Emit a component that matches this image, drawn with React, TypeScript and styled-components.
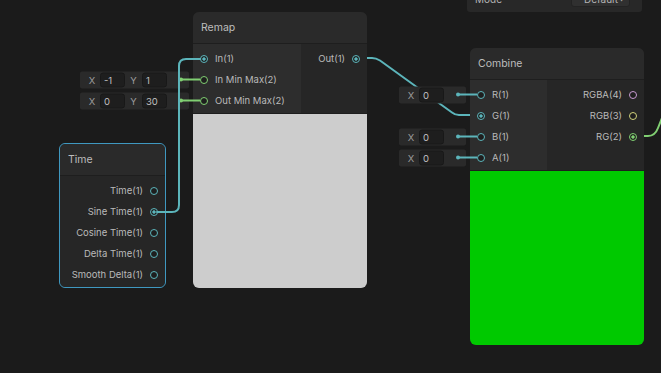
import styled, { createGlobalStyle } from 'styled-components';

const BLUE = '#5cb5bb';
const GREEN = '#80cf72';
const PINK = '#c89bd2';
const YELLOW = '#d3d37c';

const GlobalStyle = createGlobalStyle`
  html, body {
    margin: 0;
    padding: 0;
    background: #1b1b1b;
  }
  body {
    font-family: Inter, "Noto Sans", sans-serif;
    font-size: 9.5px;
    color: #bababa;
  }
`;

const Canvas = styled.div`
  position: relative;
  width: 661px;
  height: 373px;
  overflow: hidden;
  background: #1b1b1b;
`;

const Wires = styled.svg<{ $top?: boolean }>`
  position: absolute;
  left: 0;
  top: 0;
  width: 661px;
  height: 373px;
  pointer-events: none;
  z-index: ${(p) => (p.$top ? 3 : 0)};

  path {
    fill: none;
    stroke-width: 2;
    stroke-linecap: round;
    stroke-linejoin: round;
  }
`;

const Inspector = styled.div`
  position: absolute;
  left: 467px;
  top: -14px;
  width: 175px;
  height: 26px;
  box-sizing: border-box;
  padding: 0 12px 0 8px;
  background: #282828;
  border-radius: 0 0 3px 3px;
  display: flex;
  align-items: center;
  justify-content: space-between;
  z-index: 2;
  font-size: 10px;
  color: #b4b4b4;
`;

const Dropdown = styled.div`
  width: 59px;
  height: 16px;
  box-sizing: border-box;
  padding: 0 6px 0 12px;
  background: #303030;
  border: 1px solid #232323;
  border-radius: 3px;
  display: flex;
  align-items: center;
  justify-content: space-between;

  span {
    font-size: 7px;
    color: #aaa;
  }
`;

const Node = styled.div<{ $x: number; $y: number; $w: number; $selected?: boolean }>`
  position: absolute;
  left: ${(p) => p.$x}px;
  top: ${(p) => p.$y}px;
  width: ${(p) => p.$w}px;
  box-sizing: border-box;
  z-index: 1;
  display: flex;
  flex-direction: column;
  border-radius: 6px;
  background: #262626;
  border: ${(p) => (p.$selected ? '1px solid #3f98c0' : 'none')};
`;

const Header = styled.div`
  height: 31px;
  padding-left: 8px;
  display: flex;
  align-items: center;
  background: #2a2a2a;
  border-bottom: 1px solid #1e1e1e;
  border-radius: 6px 6px 0 0;
  font-size: 10.5px;
  color: #bdbdbd;
`;

const Body = styled.div`
  display: flex;
`;

const Inputs = styled.div<{ $w: number }>`
  width: ${(p) => p.$w}px;
  padding: 4px 0 2px;
  background: #2d2d2d;
`;

const Outputs = styled.div<{ $round?: boolean }>`
  flex: 1;
  padding: 4px 0 2px;
  background: #262626;
  border-radius: ${(p) => (p.$round ? '0 0 6px 6px' : '0')};
`;

const PortRow = styled.div<{ $out?: boolean }>`
  position: relative;
  height: 21px;
  display: flex;
  align-items: center;
  gap: 7px;
  justify-content: ${(p) => (p.$out ? 'flex-end' : 'flex-start')};
  padding: ${(p) => (p.$out ? '0 7px 0 0' : '0 0 0 7px')};
  white-space: nowrap;
`;

const Port = styled.span<{ $c: string; $on?: boolean }>`
  flex: none;
  width: 8px;
  height: 8px;
  box-sizing: border-box;
  border-radius: 50%;
  border: 1.5px solid ${(p) => p.$c};
  background: ${(p) =>
    p.$on ? `radial-gradient(circle, ${p.$c} 0 1.4px, #1e1e1e 1.9px)` : '#1e1e1e'};
`;

const FieldAttach = styled.div`
  position: absolute;
  right: calc(100% - 7px);
  top: 50%;
  transform: translateY(-50%);
  display: flex;
  align-items: center;
`;

const FieldBox = styled.div`
  height: 17px;
  padding: 0 6px 0 4px;
  display: flex;
  align-items: center;
  background: #2a2a2a;
  border-radius: 2px;
`;

const Axis = styled.span<{ $w?: number }>`
  width: ${(p) => p.$w ?? 16}px;
  text-align: center;
  color: #9c9c9c;
`;

const NumInput = styled.span`
  width: 25px;
  height: 15px;
  box-sizing: border-box;
  padding-left: 3px;
  display: flex;
  align-items: center;
  background: #1e1e1e;
  border: 1px solid #181818;
  border-radius: 3px;
  color: #c0c0c0;
`;

const Dot = styled.span<{ $c: string }>`
  width: 4px;
  height: 4px;
  margin-left: 12px;
  border-radius: 50%;
  background: ${(p) => p.$c};
`;

const Stub = styled.span<{ $c: string }>`
  width: 19px;
  height: 2px;
  margin-left: -8px;
  background: ${(p) => p.$c};
`;

const Preview = styled.div<{ $c: string }>`
  height: 174px;
  background: ${(p) => p.$c};
  border-top: 1px solid #1e1e1e;
  border-radius: 0 0 6px 6px;
`;

type Field = { axis: string; value: string }[];

const InPort = ({ label, color, on, field }: { label: string; color: string; on?: boolean; field?: Field }) => (
  <PortRow>
    {field && (
      <FieldAttach>
        <FieldBox>
          {field.map((f, i) => (
            <span key={f.axis} style={{ display: 'contents' }}>
              <Axis $w={i === 0 ? 16 : 17}>{f.axis}</Axis>
              <NumInput>{f.value}</NumInput>
            </span>
          ))}
          <Dot $c={color} />
        </FieldBox>
        <Stub $c={color} />
      </FieldAttach>
    )}
    <Port $c={color} $on={on} />
    <span>{label}</span>
  </PortRow>
);

const OutPort = ({ label, color, on }: { label: string; color: string; on?: boolean }) => (
  <PortRow $out>
    <span>{label}</span>
    <Port $c={color} $on={on} />
  </PortRow>
);

const App = () => {
  return (
    <Canvas>
      <GlobalStyle />
      <Wires viewBox="0 0 661 373">
        <path
          d="M361,58 H372 Q376,58 380,60.5 L452,112.5 Q455,115 459,115 H476"
          stroke={BLUE}
        />
        <path d="M637,136 H648 Q655,136 658,128 L666,108" stroke={GREEN} />
      </Wires>

      <Inspector>
        <span>Mode</span>
        <Dropdown>
          Default<span>▼</span>
        </Dropdown>
      </Inspector>

      <Node $x={193} $y={12} $w={174}>
        <Header>Remap</Header>
        <Body>
          <Inputs $w={108}>
            <InPort label="In(1)" color={BLUE} on />
            <InPort
              label="In Min Max(2)"
              color={GREEN}
              field={[
                { axis: 'X', value: '-1' },
                { axis: 'Y', value: '1' },
              ]}
            />
            <InPort
              label="Out Min Max(2)"
              color={GREEN}
              field={[
                { axis: 'X', value: '0' },
                { axis: 'Y', value: '30' },
              ]}
            />
          </Inputs>
          <Outputs>
            <OutPort label="Out(1)" color={BLUE} on />
          </Outputs>
        </Body>
        <Preview $c="#cdcdcd" />
      </Node>

      <Node $x={470} $y={48} $w={174}>
        <Header>Combine</Header>
        <Body>
          <Inputs $w={77}>
            <InPort label="R(1)" color={BLUE} field={[{ axis: 'X', value: '0' }]} />
            <InPort label="G(1)" color={BLUE} on />
            <InPort label="B(1)" color={BLUE} field={[{ axis: 'X', value: '0' }]} />
            <InPort label="A(1)" color={BLUE} field={[{ axis: 'X', value: '0' }]} />
          </Inputs>
          <Outputs>
            <OutPort label="RGBA(4)" color={PINK} />
            <OutPort label="RGB(3)" color={YELLOW} />
            <OutPort label="RG(2)" color={GREEN} on />
          </Outputs>
        </Body>
        <Preview $c="#00c900" />
      </Node>

      <Node $x={59} $y={143} $w={107} $selected>
        <Header>Time</Header>
        <Body>
          <Outputs $round>
            <OutPort label="Time(1)" color={BLUE} />
            <OutPort label="Sine Time(1)" color={BLUE} on />
            <OutPort label="Cosine Time(1)" color={BLUE} />
            <OutPort label="Delta Time(1)" color={BLUE} />
            <OutPort label="Smooth Delta(1)" color={BLUE} />
          </Outputs>
        </Body>
      </Node>

      <Wires $top viewBox="0 0 661 373">
        <path d="M157,212 H172 Q179,212 179,205 V66 Q179,59 186,59 H200" stroke={BLUE} />
      </Wires>
    </Canvas>
  );
};

export default App;
